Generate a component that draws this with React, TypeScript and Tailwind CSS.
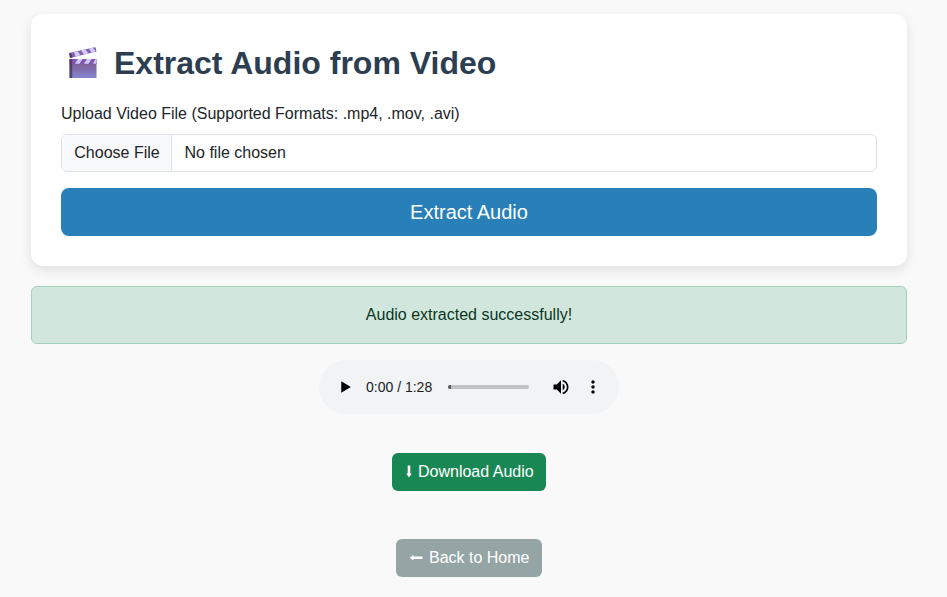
function ClapperIcon() {
  return (
    <svg className="mt-[3px] ml-[7px] h-[32px] w-[30px] shrink-0" viewBox="0 0 30 32" fill="none">
      <defs>
        <linearGradient id="board" x1="0" y1="0" x2="0" y2="1">
          <stop offset="0.15" stopColor="#7d5b8e" />
          <stop offset="1" stopColor="#8484d2" />
        </linearGradient>
        <clipPath id="arm">
          <path d="M1.200 6.600 Q1.200 6 2 5.800L26.800 0.300 Q27.600 0.200 27.800 1L28.400 4.600 2 11Z" />
        </clipPath>
      </defs>
      <g clipPath="url(#arm)">
        <path d="M0 0h30v12H0z" fill="#8660b0" />
        <path d="M5.500 4 9 3.500 12.500 8 8 10.500ZM13 3 17 2 20.500 6.500 16.200 8ZM20.500 1 24.500 0 27.500 4 24 6.500Z" fill="#cfccfc" />
      </g>
      <path d="M1.200 6.600 3 6 4.600 10.400 2 11Z" fill="#4b3a5c" />
      <path d="M1.500 12h27v19h-27z" fill="url(#board)" />
      <path d="M1.500 12h27v4.800h-27z" fill="#8757b2" />
      <path d="M10 12h4.500l-3 4.800H7ZM19 12h4.500l-3 4.800H16ZM27.500 12h1v3.500l-.8 1.300H25Z" fill="#cfccfc" />
      <path d="M1.500 12h2.700v19H1.500z" fill="#4b3a5c" fillOpacity="0.85" />
    </svg>
  );
}

function AudioPlayer() {
  return (
    <div className="mt-4 flex h-[54px] w-[300px] items-center rounded-full bg-[#f1f3f4]">
      <svg className="ml-4 size-5 shrink-0" viewBox="0 0 24 24">
        <path d="M7.500 5v14l11.500-7z" />
      </svg>
      <span className="ml-[11px] w-[82px] shrink-0 text-[14px] leading-5 whitespace-nowrap text-[#202124]">0:00 / 1:28</span>
      <div className="h-1 w-[81px] shrink-0 overflow-hidden rounded-full bg-[#c1c2c3]">
        <div className="h-1 w-[3px] bg-[#5b5c5d]" />
      </div>
      <svg className="ml-[22px] size-5 shrink-0" viewBox="0 0 24 24">
        <path d="M3 9v6h4l5 5V4L7 9H3zm13.500 3c0-1.770-1.020-3.290-2.500-4.030v8.050c1.480-.73 2.500-2.250 2.500-4.020zM14 3.230v2.060c2.890.86 5 3.540 5 6.710s-2.110 5.850-5 6.710v2.060c4.010-.91 7-4.490 7-8.770s-2.990-7.860-7-8.770z" />
      </svg>
      <svg className="ml-3 size-5 shrink-0" viewBox="0 0 24 24">
        <path d="M12 8c1.100 0 2-.9 2-2s-.9-2-2-2-2 .9-2 2 .9 2 2 2zm0 2c-1.100 0-2 .9-2 2s.9 2 2 2 2-.9 2-2-.9-2-2-2zm0 6c-1.100 0-2 .9-2 2s.9 2 2 2 2-.9 2-2-.9-2-2-2z" />
      </svg>
    </div>
  );
}

export default function App() {
  return (
    <main className="flex min-h-screen flex-col items-center bg-[#f9f9f9] pt-[14px] pr-[9px] font-['Liberation_Sans',Arial,sans-serif] text-base leading-6 text-[#212529]">
      <section className="h-[252px] w-[876px] rounded-xl bg-white p-[30px] shadow-[0_4px_12px_rgba(0,0,0,0.1)]">
        <h2 className="flex h-[38px] text-[32px] leading-[38px] font-bold text-[#2c3e50]">
          <ClapperIcon />
          <span className="ml-4 whitespace-nowrap">Extract Audio from Video</span>
        </h2>
        <label className="mt-5 block">Upload Video File (Supported Formats: .mp4, .mov, .avi)</label>
        <div className="mt-2 flex h-[38px] overflow-hidden rounded-md border border-[#dee2e6] bg-white">
          <button className="w-[110px] border-r border-[#dee2e6] bg-[#f8f9fa] pl-px">Choose File</button>
          <span className="py-[6px] pl-[12.5px]">No file chosen</span>
        </div>
        <button className="mt-4 h-12 w-full rounded-lg bg-[#2980b9] text-xl text-white">Extract Audio</button>
      </section>
      <div className="mt-5 flex h-[58px] w-[876px] items-center justify-center rounded-md border border-[#a3cfbb] bg-[#d1e7dd] text-[#0a3622]">
        Audio extracted successfully!
      </div>
      <AudioPlayer />
      <button className="mt-[39px] flex h-[38px] w-[154px] items-center rounded-md bg-[#198754] pl-[13px] text-white">
        <svg className="mr-[5px] h-[14px] w-2 shrink-0" viewBox="0 0 8 14" fill="currentColor">
          <path d="M2.700 0.500h2.600v8h1.400L4 12.500l-2.700-4h1.400z" />
        </svg>
        <span className="whitespace-nowrap">Download Audio</span>
      </button>
      <button className="mt-12 flex h-[38px] w-[146px] items-center rounded-md bg-[#95a5a6] pl-[13px] text-white">
        <svg className="mr-[6px] h-2 w-[14px] shrink-0" viewBox="0 0 14 8" fill="currentColor">
          <path d="M0.500 3.700 4.500 1v1.400h9V5h-9v1.400z" />
        </svg>
        <span className="whitespace-nowrap">Back to Home</span>
      </button>
    </main>
  );
}
